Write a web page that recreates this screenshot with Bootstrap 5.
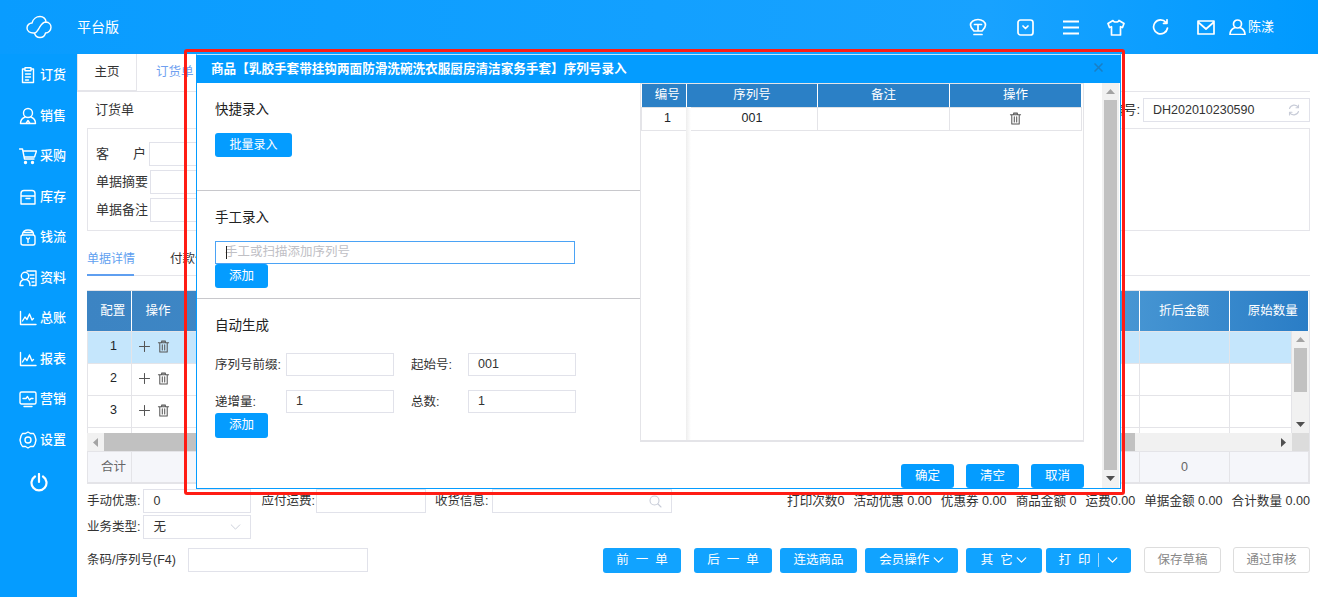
<!DOCTYPE html>
<html lang="zh-CN">
<head>
<meta charset="utf-8">
<title>订货单</title>
<link href="https://cdn.jsdelivr.net/npm/bootstrap@5.3.0/dist/css/bootstrap.min.css" rel="stylesheet">
<style>
html,body{height:597px;overflow:hidden;background:#fff}
body{font:13px/20px "Liberation Sans","Noto Sans CJK SC",sans-serif;color:#333;position:relative}
.ic{fill:none;stroke:#fff;stroke-width:1.4;stroke-linecap:round;stroke-linejoin:round;flex:none}
.ic-t{stroke-width:1.7}
.ic-d{fill:none;stroke:#555;stroke-width:1.1;stroke-linecap:round;stroke-linejoin:round;flex:none}
.ic-pale{stroke:#c8ccd8}
.topbar{height:54px;background:linear-gradient(90deg,#099cff,#18a2ff 75%,#009aff);color:#fff}
.logo-wrap{width:77px}
.brand-txt{font-size:14px}
.top-icons{padding-right:44px}
.top-ic{width:45px}
.bulb-shift{margin-right:5px}
.user-wrap{margin-left:1px;width:45px;gap:2px}
.shell{height:543px}
.sidebar{width:77px;background:#059cff;color:#fff;padding-top:1px}
.side-item{height:40.5px;padding-left:19px;gap:3px;font-weight:500}
.power{height:44px;padding-top:13px}
.content{min-width:0;padding-right:8px}
.tabsbar{height:38px;border-bottom:1px solid #e5e5ea;--bs-nav-tabs-border-width:0}
.tab-home{width:60px;height:37px;border:1px solid #e5e5ea;border-top:0;color:#333;font-size:12.5px}
.tab-cur{margin-left:19px;color:#6f9ff0;font-size:12.5px;line-height:37px}
.inner{padding-left:10px}
.title-row{height:36px}
.lbl-r{margin-right:3px}
.txt-in{height:24px;border:1px solid #e1e2ea;background:#fff;padding:0 9px;font-size:12.5px;color:#333;line-height:22px;flex:none}
.no-in{width:167px}
.form-box{height:103px;border:1px solid #e5e5ea;padding:13px 8px 0}
.form-line{height:28px}
.form-lbl{width:54px;flex:none;color:#333;line-height:24px}
.form-lbl-sp{width:53px;padding-right:3px}
.form-in{width:220px}
.subtabs{height:45px;border-bottom:1px solid #e5e5ea;margin-bottom:14px;padding-top:18px}
.sub-cur{width:47px;color:#5f9ff0;border-bottom:2px solid #5f9ff0;height:27px;font-size:12px;white-space:nowrap}
.sub-other{margin-left:36px;font-size:12.5px}
.datagrid{border:1px solid #e4e4e8;border-left:0;border-bottom-width:2px;height:194px;overflow:hidden}
.dg-table{table-layout:fixed;width:100%;border-collapse:collapse;margin:0}
.dg-table td,.dg-table th{border:1px solid #e4e4e8;text-align:center;vertical-align:middle;padding:0;font-weight:400;font-size:12.5px}
.dg-head{background:linear-gradient(90deg,#3c84c3,#4796d3 85%,#2a7dc6);color:#fff;height:40px}
.dg-head th{border-color:#fff;border-width:0 1px;border-style:solid;height:40px;background:transparent;color:#fff}
.dg-head th:first-child{border-left:0}
.dg-table tr.rw td{height:32px;padding-bottom:3px}
.dg-table .cp{padding-left:8px}
.dg-table .op-h{text-align:left;padding-left:14px}
.dg-table .ops{text-align:left;padding-left:7px}
.rw-sel td{background:#c5e6fc}
.c1{width:44px}.c2{width:1008px}.c3{width:90px}
.dg-body{height:102px;overflow:hidden}
.vs{width:17px;background:#f1f1f1;flex:none;height:102px}
.vs-thumb{width:13px;height:44px;background:#c1c1c1;margin:0 auto}
.arr-box{height:17px}
.arr-gap{margin-top:24px}
.hs{height:18px;background:#f1f1f1}
.hs-gut{width:17px;flex:none}
.hs-thumb{background:#c1c1c1;width:1031px;height:18px;flex:none}
.hs-corner{width:17px;height:18px;background:#dcdcdc;flex:none}
.hs-track{padding-right:6px}
.dg-table.sumrow,.dg-table.sumrow td{background:#f5f6fa;color:#666}
.dg-table.sumrow td{height:32px;padding-bottom:2px}
.bot1{height:22px;margin-top:6px;font-size:12.5px}
.bot-in{height:24px}
.lab2{margin-left:10px;margin-right:1px}
.lab3{margin-left:9px;margin-right:4px}
.w108{width:108px}.w110{width:110px}.w180{width:180px}
.stats{white-space:nowrap;gap:9px;font-size:12.6px}
.bot2{height:22px;margin-top:4px;font-size:12.5px}
.bot3{height:26px;margin-top:9px;font-size:12.5px}
.code-lbl{margin-right:12px}
.act{--bs-btn-padding-y:0;--bs-btn-padding-x:0;--bs-btn-font-size:12.5px;--bs-btn-line-height:1;--bs-btn-border-width:0;--bs-btn-border-radius:3px;--bs-btn-color:#fff;--bs-btn-bg:#11a3ff;--bs-btn-hover-bg:#11a3ff;--bs-btn-hover-color:#fff;height:25px}
.act-m{--bs-btn-bg:#049cff;--bs-btn-hover-bg:#049cff}
.ghost{--bs-btn-bg:#fff;--bs-btn-color:#888;--bs-btn-hover-bg:#fff;--bs-btn-hover-color:#888;--bs-btn-border-width:1px;--bs-btn-border-color:#ddd;--bs-btn-hover-border-color:#ddd;width:77px;height:26px}
.w78{width:78px}.w77{width:77px}.w93{width:93px}.w76{width:76px}.w85{width:85px}
.split{width:1px;height:14px;background:#9fd8ff;margin:0 8px}
.after-first{margin-right:5px}
.pull-print{margin-left:-4px;margin-right:1px}
/* dialog */
.dlg{position:absolute;left:196px;top:54px;width:925px;height:435px;border:1px solid #049cff;border-top-color:#bfe6ff;background:#fff;z-index:5}
.dlg-head{height:28px;background:#049cff;color:#fff;padding:0 17px 0 14px;font-weight:700;font-size:12.6px}
.dlg-x{fill:none;stroke:#1a7fc4;stroke-width:1.5;margin-bottom:3px}
.dlg-body{height:405px}
.pane-l{width:443px;flex:none}
.sec{padding:17px 0 0 18px;border-bottom:1px solid #c8c8cc}
.s1{height:108px}.s2{height:108px}.s3{border-bottom:0}
.sec-t{height:20px;margin-bottom:13px;color:#222;font-size:13.5px}
.s3 .sec-t{margin-bottom:17px}
.batch{width:77px;height:24px;--bs-btn-font-size:12px}
.scan{width:360px;height:23px;border:1px solid #4ba3f5;padding:0 9px;color:#c0c0c5;line-height:21px;font-size:12.5px;position:relative}
.caret-bar{position:absolute;left:10px;top:4px;width:1px;height:13px;background:#222}
.add{width:53px;height:24px}
.add3{height:25px}
.gen-row{height:23px;margin-bottom:14px}
.gen-row.last{margin-bottom:0}
.gen-l{width:71px;font-size:12.5px;flex:none}
.gen-l2{width:57px;margin-left:17px;font-size:12.5px;flex:none}
.gen-in{width:108px;height:23px;line-height:21px}
.pane-r{width:444px;flex:none}
.sn-grid{height:359px;border:1px solid #e4e4e8;border-bottom-width:2px;position:relative}
.sn-table{table-layout:fixed;width:441px;border-collapse:collapse;margin:0}
.sn-table th{background:#2b80c6;color:#fff;font-weight:400;height:23px;border-right:1px solid #fff;text-align:center;vertical-align:middle;padding:0;font-size:12.5px}
.sn-table td{height:23px;border:1px solid #e4e4e8;border-top:0;text-align:center;vertical-align:middle;padding:0 0 2px;font-size:12.5px}
.sn-table .first-col{padding-left:7px}
.c-a{width:45px}.c-b{width:131px}.c-c{width:132px}
.shade{position:absolute;left:45px;top:23px;bottom:0;width:5px;background:linear-gradient(90deg,#eee,#fff)}
.dlg-foot{height:46px;gap:12px;align-items:flex-end}
.foot-btn{width:53px;height:24px}
.vs-d{width:17px;background:#f1f1f1;height:405px;flex:none;margin-left:auto;margin-right:1px}
.vs-d-thumb{width:13px;height:370px;background:#c1c1c1;margin:0 auto}
.callout{position:absolute;left:184px;top:49px;width:941px;height:446px;border:3px solid #ff1c14;border-radius:3px;z-index:6;pointer-events:none}
</style>
</head>
<body>
<svg width="0" height="0" class="d-block position-absolute">
<defs>
<symbol id="trash" viewBox="0 0 14 14"><path d="M1.500 3h11M5 3V1.200h4V3M3 3v10h8V3M5.700 5.200v5.500M8.300 5.200v5.500"/></symbol>
<symbol id="plus" viewBox="0 0 12 12"><path d="M6 .5v11M.5 6h11"/></symbol>
<symbol id="chev" viewBox="0 0 12 7"><path d="M1 1l5 5 5-5"/></symbol>
<symbol id="chart" viewBox="0 0 18 18"><path d="M1.500 2.500v13h15.500M3.500 12l2.500-4 2 2.500 2.500-5.500 2.500 6 1.500-1.500"/></symbol>
</defs>
</svg>

<header class="topbar d-flex align-items-center">
  <div class="logo-wrap d-flex justify-content-center">
    <svg class="ic" width="26" height="24" viewBox="0 0 26 24"><path d="M6 8C7 4 10.500 1.500 14 1.500c3.500 0 6 2.500 6 5.500 3 .2 5 2.500 5 5.300 0 3-2.500 5.700-5.500 5.700-.5 2.500-2.500 4.500-5.500 4.500s-5-2-5.500-4.500C3.500 18.500 1 16 1 13c0-3 2.500-5 5-5zM20 7c-3.500 0-5 3-6.500 5.500S10.500 18 8.500 18"/></svg>
  </div>
  <div class="brand-txt">平台版</div>
  <div class="ms-auto d-flex align-items-center top-icons">
    <div class="top-ic d-flex justify-content-center"><svg class="ic ic-t bulb-shift" width="18" height="18" viewBox="0 0 18 18"><path d="M9 1.500c4.200 0 7.500 2.600 7.500 5.600 0 2.400-2 4.200-3.500 5.900H5C3.500 11.300 1.500 9.500 1.500 7.100 1.500 4.100 4.800 1.500 9 1.500zM5.500 6.500h7M9 6.500V13M5 16.500h8"/></svg></div>
    <div class="top-ic d-flex justify-content-center"><svg class="ic ic-t" width="17" height="17" viewBox="0 0 17 17"><rect x="1" y="1" width="15" height="15" rx="2.500"/><path d="M6 7l2.500 2.500L11 7"/></svg></div>
    <div class="top-ic d-flex justify-content-center"><svg class="ic" width="16" height="15" viewBox="0 0 16 15"><path stroke-width="2" d="M.5 1.500h15M.5 7.500h15M.5 13.500h15"/></svg></div>
    <div class="top-ic d-flex justify-content-center"><svg class="ic ic-t" width="18" height="17" viewBox="0 0 18 17"><path d="M6 1.500L1 4.500l1.500 4 2-.8V16h9V7.700l2 .8 1.500-4-5-3c-.5 2-5.500 2-6 0z"/></svg></div>
    <div class="top-ic d-flex justify-content-center"><svg class="ic" width="17" height="17" viewBox="0 0 17 17"><path stroke-width="1.700" d="M14 3.500A7 7 0 1 0 15.500 9M15 .8v3.500h-3.500"/></svg></div>
    <div class="top-ic d-flex justify-content-center"><svg class="ic" width="18" height="15" viewBox="0 0 18 15"><path stroke-width="1.700" d="M1 1h16v13H1zM1 2l8 7 8-7"/></svg></div>
    <div class="user-wrap d-flex align-items-center">
      <svg class="ic ic-t" width="17" height="16" viewBox="0 0 17 16"><circle cx="8.500" cy="5" r="4"/><path d="M1 15.500c0-4 3-6 4.500-6.700M16 15.500c0-4-3-6-4.500-6.700M1 15.500h15"/></svg>
      <span>陈漾</span>
    </div>
  </div>
</header>

<div class="shell d-flex">
  <nav class="sidebar flex-shrink-0">
    <div class="side-item d-flex align-items-center"><svg class="ic" width="18" height="18" viewBox="0 0 18 18"><path d="M6 3H3.500v13.500h11V3H12M6 1.800h6v3H6zM6.500 8h5M6.500 11h5M6.500 14h3"/></svg>订货</div>
    <div class="side-item d-flex align-items-center"><svg class="ic" width="18" height="18" viewBox="0 0 18 18"><circle cx="9" cy="6" r="4.500"/><path d="M6 10C3.500 11 1.500 13.500 1.500 16.500h15C16.500 13.500 14.500 11 12 10M7 16.500l2-3 2 3"/></svg>销售</div>
    <div class="side-item d-flex align-items-center"><svg class="ic" width="18" height="18" viewBox="0 0 18 18"><path d="M.5 2h3l2 10h9.500M4 4h13.500l-2 6H5.200"/><circle cx="6.500" cy="15.500" r="1" fill="#fff"/><circle cx="13.500" cy="15.500" r="1" fill="#fff"/></svg>采购</div>
    <div class="side-item d-flex align-items-center"><svg class="ic" width="18" height="18" viewBox="0 0 18 18"><path d="M5 2.500h8a3 3 0 0 1 3 3v10.500H2V5.500a3 3 0 0 1 3-3zM2 8h14M7 10.500h4"/></svg>库存</div>
    <div class="side-item d-flex align-items-center"><svg class="ic" width="18" height="18" viewBox="0 0 18 18"><path d="M3.500 6.500c0-3 2.500-4.500 5.500-4.500s5.500 1.500 5.500 4.500M4 4.500h10"/><rect x="2" y="7" width="14" height="10" rx="2"/><path d="M7.500 10L9 11.500 10.500 10M9 11.500V14.500"/></svg>钱流</div>
    <div class="side-item d-flex align-items-center"><svg class="ic" width="18" height="18" viewBox="0 0 18 18"><circle cx="6" cy="7" r="3.700"/><path d="M1 16.500c0-3.500 2-5.500 3.500-6M11 16.500c0-3.500-2-5.500-3.500-6M1 16.500h3M8 2h9v14.500h-4M11 6h4M11.500 9.500h3.500M13 13h2"/></svg>资料</div>
    <div class="side-item d-flex align-items-center"><svg class="ic" width="18" height="18"><use href="#chart"/></svg>总账</div>
    <div class="side-item d-flex align-items-center"><svg class="ic" width="18" height="18"><use href="#chart"/></svg>报表</div>
    <div class="side-item d-flex align-items-center"><svg class="ic" width="18" height="18" viewBox="0 0 18 18"><rect x="1" y="2" width="16" height="12" rx="1.500"/><path d="M4 8.500h3l1.500-2 2 3.500 1.500-1.500h2M5 16.500h8"/></svg>营销</div>
    <div class="side-item d-flex align-items-center"><svg class="ic" width="18" height="18" viewBox="0 0 18 18"><path d="M6.500 2.500L9 1l2.500 1.500 3 0L16 5l1 4-1 4-1.500 2.500h-3L9 17l-2.500-1.500h-3L2 13 1 9l1-4 1.500-2.500z"/><circle cx="9" cy="9" r="3"/></svg>设置</div>
    <div class="power d-flex justify-content-center"><svg class="ic" width="18" height="19" viewBox="0 0 18 19"><path stroke-width="2.200" d="M5 3.500a7.500 7.500 0 1 0 8 0M9 1v8"/></svg></div>
  </nav>

  <main class="content flex-grow-1">
    <div class="tabsbar nav nav-tabs align-items-start">
      <div class="tab-home d-flex align-items-center justify-content-center">主页</div>
      <div class="tab-cur">订货单</div>
    </div>
    <div class="inner">
      <div class="title-row d-flex align-items-center justify-content-between">
        <span class="ms-2">订货单</span>
        <div class="d-flex align-items-center">
          <span class="lbl-r">单据编号:</span>
          <div class="txt-in no-in d-flex align-items-center justify-content-between">DH202010230590
            <svg class="ic-d ic-pale" width="12" height="12" viewBox="0 0 12 12"><path d="M10.500 3.500A5 5 0 0 0 1.500 4.500M1.500 8.500a5 5 0 0 0 9-1M10.500 1v2.700H8M1.500 11V8.300H4"/></svg>
          </div>
        </div>
      </div>
      <div class="form-box">
        <div class="form-line d-flex"><span class="form-lbl form-lbl-sp d-flex justify-content-between"><span>客</span><span>户</span></span><div class="txt-in form-in"></div></div>
        <div class="form-line d-flex"><span class="form-lbl">单据摘要</span><div class="txt-in form-in"></div></div>
        <div class="form-line d-flex"><span class="form-lbl">单据备注</span><div class="txt-in form-in"></div></div>
      </div>
      <div class="subtabs d-flex">
        <div class="sub-cur">单据详情</div>
        <div class="sub-other">付款信息</div>
      </div>

      <div class="datagrid">
        <table class="table dg-table dg-head"><colgroup><col class="c1"><col class="c2"><col class="c3"><col></colgroup>
          <tr><th class="cp">配置</th><th class="op-h">操作</th><th>折后金额</th><th class="cp">原始数量</th></tr></table>
        <div class="dg-body d-flex">
          <table class="table dg-table flex-grow-1"><colgroup><col class="c1"><col class="c2"><col class="c3"><col></colgroup>
            <tr class="rw rw-sel"><td class="cp">1</td><td class="ops"><svg class="ic-d" width="11" height="11"><use href="#plus"/></svg> &nbsp;<svg class="ic-d" width="13" height="13"><use href="#trash"/></svg></td><td></td><td></td></tr>
            <tr class="rw"><td class="cp">2</td><td class="ops"><svg class="ic-d" width="11" height="11"><use href="#plus"/></svg> &nbsp;<svg class="ic-d" width="13" height="13"><use href="#trash"/></svg></td><td></td><td></td></tr>
            <tr class="rw"><td class="cp">3</td><td class="ops"><svg class="ic-d" width="11" height="11"><use href="#plus"/></svg> &nbsp;<svg class="ic-d" width="13" height="13"><use href="#trash"/></svg></td><td></td><td></td></tr>
            <tr class="rw"><td></td><td></td><td></td><td></td></tr>
          </table>
          <div class="vs">
            <div class="arr-box d-flex align-items-center justify-content-center"><svg width="9" height="5" viewBox="0 0 9 5"><path d="M4.500 0L9 5H0z" fill="#a3a3a3"/></svg></div>
            <div class="vs-thumb"></div>
            <div class="arr-box arr-gap d-flex align-items-center justify-content-center"><svg width="9" height="5" viewBox="0 0 9 5"><path d="M0 0h9L4.500 5z" fill="#505050"/></svg></div>
          </div>
        </div>
        <div class="hs d-flex align-items-center">
          <div class="arr-box d-flex align-items-center justify-content-center hs-gut"><svg width="5" height="9" viewBox="0 0 5 9"><path d="M5 0v9L0 4.500z" fill="#a3a3a3"/></svg></div>
          <div class="hs-thumb"></div>
          <div class="hs-track flex-grow-1 d-flex justify-content-end align-items-center"><svg width="5" height="9" viewBox="0 0 5 9"><path d="M0 0v9l5-4.500z" fill="#505050"/></svg></div>
          <div class="hs-corner"></div>
        </div>
        <table class="table dg-table sumrow"><colgroup><col class="c1"><col class="c2"><col class="c3"><col></colgroup>
          <tr><td class="cp">合计</td><td></td><td>0</td><td></td></tr></table>
      </div>

      <div class="bot1 d-flex align-items-center">
        <span class="lbl-r">手动优惠:</span><div class="txt-in bot-in w108">0</div>
        <span class="lab2">应付运费:</span><div class="txt-in bot-in w110"></div>
        <span class="lab3">收货信息:</span>
        <div class="txt-in bot-in w180 d-flex align-items-center justify-content-end"><svg class="ic-d ic-pale" width="13" height="13" viewBox="0 0 13 13"><circle cx="5.500" cy="5.500" r="4.500"/><path d="M9 9l3 3"/></svg></div>
        <div class="stats ms-auto d-flex"><span>打印次数0</span><span>活动优惠 0.00</span><span>优惠券 0.00</span><span>商品金额 0</span><span>运费0.00</span><span>单据金额 0.00</span><span>合计数量 0.00</span></div>
      </div>
      <div class="bot2 d-flex align-items-center">
        <span class="lbl-r">业务类型:</span>
        <div class="txt-in bot-in w108 d-flex align-items-center justify-content-between">无<svg class="ic-d ic-pale" width="11" height="6"><use href="#chev"/></svg></div>
      </div>
      <div class="bot3 d-flex align-items-center">
        <span class="code-lbl">条码/序列号(F4)</span>
        <div class="txt-in bot-in w180"></div>
        <div class="ms-auto d-flex align-items-center gap-2">
          <button class="btn act w78 after-first">前&nbsp;&nbsp;一&nbsp;&nbsp;单</button>
          <button class="btn act w78">后&nbsp;&nbsp;一&nbsp;&nbsp;单</button>
          <button class="btn act w77">连选商品</button>
          <button class="btn act w93">会员操作 <svg class="ic" width="11" height="6"><use href="#chev"/></svg></button>
          <button class="btn act w76">其&nbsp;&nbsp;它 <svg class="ic" width="11" height="6"><use href="#chev"/></svg></button>
          <button class="btn act w85 pull-print d-flex align-items-center justify-content-center">打&nbsp;&nbsp;印<span class="split"></span><svg class="ic" width="11" height="6"><use href="#chev"/></svg></button>
          <button class="btn act ghost ms-1">保存草稿</button>
          <button class="btn act ghost ms-1">通过审核</button>
        </div>
      </div>
    </div>
  </main>
</div>

<section class="dlg">
  <div class="dlg-head d-flex align-items-center justify-content-between">
    <span>商品【乳胶手套带挂钩两面防滑洗碗洗衣服厨房清洁家务手套】序列号录入</span>
    <svg class="dlg-x" width="9" height="9" viewBox="0 0 9 9"><path d="M.5.5l8 8M8.500.5l-8 8"/></svg>
  </div>
  <div class="dlg-body d-flex">
    <div class="pane-l">
      <div class="sec s1">
        <div class="sec-t">快捷录入</div>
        <button class="btn act act-m batch">批量录入</button>
      </div>
      <div class="sec s2">
        <div class="sec-t">手工录入</div>
        <div class="scan">手工或扫描添加序列号<span class="caret-bar"></span></div>
        <button class="btn act act-m add d-block">添加</button>
      </div>
      <div class="sec s3">
        <div class="sec-t">自动生成</div>
        <div class="gen-row d-flex align-items-center"><span class="gen-l">序列号前缀:</span><div class="txt-in gen-in"></div><span class="gen-l2">起始号:</span><div class="txt-in gen-in">001</div></div>
        <div class="gen-row last d-flex align-items-center"><span class="gen-l">递增量:</span><div class="txt-in gen-in">1</div><span class="gen-l2">总数:</span><div class="txt-in gen-in">1</div></div>
        <button class="btn act act-m add add3 d-block">添加</button>
      </div>
    </div>
    <div class="pane-r">
      <div class="sn-grid">
        <table class="table sn-table"><colgroup><col class="c-a"><col class="c-b"><col class="c-c"><col></colgroup>
          <tr><th class="first-col">编号</th><th>序列号</th><th>备注</th><th>操作</th></tr>
          <tr><td class="first-col">1</td><td>001</td><td></td><td><svg class="ic-d" width="13" height="13"><use href="#trash"/></svg></td></tr>
        </table>
        <div class="shade"></div>
      </div>
      <div class="dlg-foot d-flex justify-content-end">
        <button class="btn act act-m foot-btn">确定</button>
        <button class="btn act act-m foot-btn">清空</button>
        <button class="btn act act-m foot-btn">取消</button>
      </div>
    </div>
    <div class="vs-d">
      <div class="arr-box d-flex align-items-center justify-content-center"><svg width="9" height="5" viewBox="0 0 9 5"><path d="M4.500 0L9 5H0z" fill="#a3a3a3"/></svg></div>
      <div class="vs-d-thumb"></div>
      <div class="arr-box d-flex align-items-center justify-content-center"><svg width="9" height="5" viewBox="0 0 9 5"><path d="M0 0h9L4.500 5z" fill="#505050"/></svg></div>
    </div>
  </div>
</section>
<div class="callout"></div>
<script src="https://cdn.jsdelivr.net/npm/bootstrap@5.3.0/dist/js/bootstrap.bundle.min.js"></script>
</body>
</html>
